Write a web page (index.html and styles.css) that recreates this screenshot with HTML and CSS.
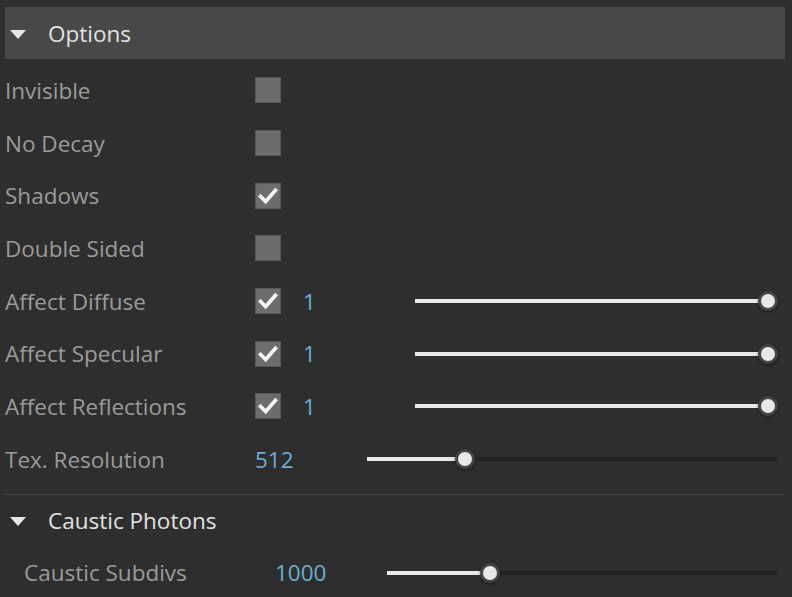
FILE: index.html
```html
<!DOCTYPE html>
<html lang="en">
<head>
<meta charset="UTF-8">
<title>Light Options</title>
<link rel="stylesheet" href="styles.css">
</head>
<body>

<div class="panel">
    <div class="section-head boxed">
        <span class="arrow"></span>
        <span class="title">Options</span>
    </div>

    <div class="row">
        <span class="label">Invisible</span>
        <span class="check"></span>
    </div>
    <div class="row">
        <span class="label">No Decay</span>
        <span class="check"></span>
    </div>
    <div class="row">
        <span class="label">Shadows</span>
        <span class="check on"><svg viewBox="0 0 26 26"><path d="M5 13.5 L10.5 19 L21 7" /></svg></span>
    </div>
    <div class="row">
        <span class="label">Double Sided</span>
        <span class="check"></span>
    </div>
    <div class="row">
        <span class="label">Affect Diffuse</span>
        <span class="check on"><svg viewBox="0 0 26 26"><path d="M5 13.5 L10.5 19 L21 7" /></svg></span>
        <span class="value">1</span>
        <div class="slider"><div class="fill" style="width: 100%"></div><span class="thumb" style="left: 100%"></span></div>
    </div>
    <div class="row">
        <span class="label">Affect Specular</span>
        <span class="check on"><svg viewBox="0 0 26 26"><path d="M5 13.5 L10.5 19 L21 7" /></svg></span>
        <span class="value">1</span>
        <div class="slider"><div class="fill" style="width: 100%"></div><span class="thumb" style="left: 100%"></span></div>
    </div>
    <div class="row">
        <span class="label">Affect Reflections</span>
        <span class="check on"><svg viewBox="0 0 26 26"><path d="M5 13.5 L10.5 19 L21 7" /></svg></span>
        <span class="value">1</span>
        <div class="slider"><div class="fill" style="width: 100%"></div><span class="thumb" style="left: 100%"></span></div>
    </div>
    <div class="row">
        <span class="label">Tex. Resolution</span>
        <span class="value wide">512</span>
        <div class="slider end"><div class="fill" style="width: 24%"></div><span class="thumb" style="left: 24%"></span></div>
    </div>

    <div class="divider"></div>

    <div class="section-head">
        <span class="arrow"></span>
        <span class="title">Caustic Photons</span>
    </div>
    <div class="row sub">
        <span class="label">Caustic Subdivs</span>
        <span class="value wide">1000</span>
        <div class="slider end"><div class="fill" style="width: 26.3%"></div><span class="thumb" style="left: 26.3%"></span></div>
    </div>
</div>

</body>
</html>
```

FILE: styles.css
```css
html, body {
    margin: 0;
    background: #2e2e2e;
}

body {
    font-family: 'Open Sans', 'Noto Sans', sans-serif;
    overflow: hidden;
}

.panel {
    padding: 7px 0 0 5px;
    width: 780px;
}

.section-head {
    display: flex;
    align-items: center;
    height: 52px;
    color: #e2e2e2;
    font-size: 22.5px;
}

.section-head.boxed {
    background: #484848;
    margin-bottom: 5px;
}

.arrow {
    width: 0;
    height: 0;
    border-left: 8px solid transparent;
    border-right: 8px solid transparent;
    border-top: 9px solid #e8e8e8;
    margin: 2px 22px 0 5px;
}

.row {
    display: flex;
    align-items: center;
    height: 52.7px;
    color: #9b9b9b;
    font-size: 22.5px;
}

.label {
    width: 250px;
    flex: none;
}

.check {
    width: 24px;
    height: 24px;
    background: #6d6d6d;
    border: 1px solid #585858;
    flex: none;
}

.check svg {
    width: 24px;
    height: 24px;
    display: block;
}

.check svg path {
    fill: none;
    stroke: #f4f4f4;
    stroke-width: 4;
    stroke-linecap: square;
}

.value {
    color: #6aaed3;
    width: 112px;
    margin-left: 22px;
    flex: none;
}

.value.wide {
    margin-left: 0;
    width: 112px;
}

.slider {
    position: relative;
    height: 4px;
    flex: 1;
    margin-right: 17px;
    background: #232323;
}

.slider.end {
    margin-right: 8px;
}

.fill {
    height: 100%;
    background: #e8e8e8;
}

.thumb {
    position: absolute;
    top: 50%;
    width: 14px;
    height: 14px;
    margin: -10px 0 0 -10px;
    border-radius: 50%;
    background: #e8e8e8;
    border: 3px solid #444;
    box-shadow: 0 1px 3px rgba(0,0,0,0.5);
}

.divider {
    height: 1px;
    background: #474747;
    margin-top: 8px;
}

.sub {
    padding-left: 19px;
}

.sub .label {
    width: 251px;
}
```
